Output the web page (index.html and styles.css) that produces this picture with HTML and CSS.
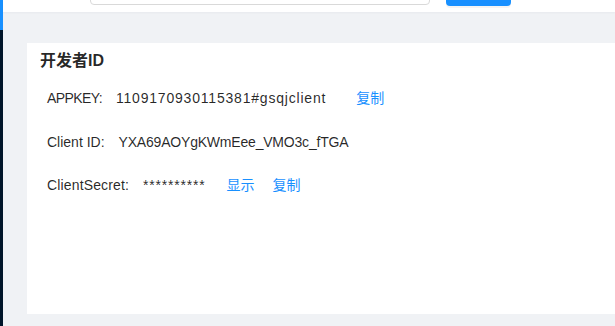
FILE: index.html
```html
<!DOCTYPE html>
<html lang="zh-CN">
<head>
    <meta charset="UTF-8">
    <meta name="viewport" content="width=device-width, initial-scale=1.0">
    <title>开发者ID</title>
    <link rel="stylesheet" href="styles.css">
</head>
<body>

<div class="layout">
    <div class="sider">
        <div class="sider-active"></div>
    </div>

    <div class="main">
        <div class="header">
            <input class="search" type="text">
            <button class="search-btn"></button>
        </div>

        <div class="content">
            <div class="card">
                <h3 class="card-title">开发者ID</h3>

                <div class="row">
                    <span class="label label-caps">APPKEY:</span>
                    <span class="value value-num">1109170930115381#gsqjclient</span>
                    <a class="link" href="#">复制</a>
                </div>

                <div class="row">
                    <span class="label">Client ID:</span>
                    <span class="value value-id">YXA69AOYgKWmEee_VMO3c_fTGA</span>
                </div>

                <div class="row">
                    <span class="label label-wide">ClientSecret:</span>
                    <span class="value value-secret">**********</span>
                    <a class="link link-tight" href="#">显示</a>
                    <a class="link" href="#">复制</a>
                </div>
            </div>
        </div>
    </div>
</div>

</body>
</html>
```

FILE: styles.css
```css
html, body {
    margin: 0;
    padding: 0;
    height: 100%;
}
body {
    font-family: "Helvetica Neue", "Liberation Sans", "Noto Sans CJK SC", sans-serif;
    font-size: 14px;
    color: rgba(0, 0, 0, 0.85);
    background: #f0f2f5;
    overflow: hidden;
}
.layout {
    display: flex;
    height: 100%;
}
.sider {
    width: 3px;
    flex-shrink: 0;
    background: #001529;
}
.sider-active {
    height: 30px;
    background: #1890ff;
}
.main {
    flex: 1;
    display: flex;
    flex-direction: column;
    min-width: 0;
}
.header {
    height: 12px;
    background: #fff;
    display: flex;
    align-items: flex-end;
    padding: 0 0 7px 87px;
    box-sizing: border-box;
    overflow: hidden;
    box-shadow: 0 1px 2px rgba(0, 21, 41, 0.04);
}
.search {
    width: 340px;
    height: 32px;
    flex-shrink: 0;
    box-sizing: border-box;
    border: 1px solid #d9d9d9;
    border-radius: 4px;
    margin: 0;
    padding: 0;
}
.search-btn {
    width: 65px;
    height: 33px;
    flex-shrink: 0;
    margin: 0 0 -1px 16px;
    border: none;
    border-radius: 4px;
    background: #1890ff;
    box-shadow: 0 2px 0 rgba(0, 0, 0, 0.045);
}
.content {
    flex: 1;
    padding: 31px 0 12px 24px;
    display: flex;
    flex-direction: column;
}
.card {
    flex: 1;
    background: #fff;
    padding: 6px 13px 0;
}
.card-title {
    margin: 0 0 14px;
    font-size: 16px;
    line-height: 24px;
    font-weight: bold;
    color: rgba(0, 0, 0, 0.85);
}
.row {
    display: flex;
    align-items: center;
    height: 22px;
    line-height: 22px;
    padding-left: 7px;
    margin-bottom: 21.5px;
}
.label {
    margin-right: 14px;
}
.label-caps {
    letter-spacing: -0.6px;
}
.label-wide {
    letter-spacing: 0.15px;
}
.value {
    margin-right: 30px;
}
.value-num {
    letter-spacing: 0.8px;
}
.value-id {
    letter-spacing: -0.2px;
}
.value-secret {
    letter-spacing: 0.8px;
    margin-right: 21px;
}
.link {
    color: #1890ff;
    text-decoration: none;
    margin-right: 19px;
}
.link-tight {
    margin-right: 18px;
}
```
